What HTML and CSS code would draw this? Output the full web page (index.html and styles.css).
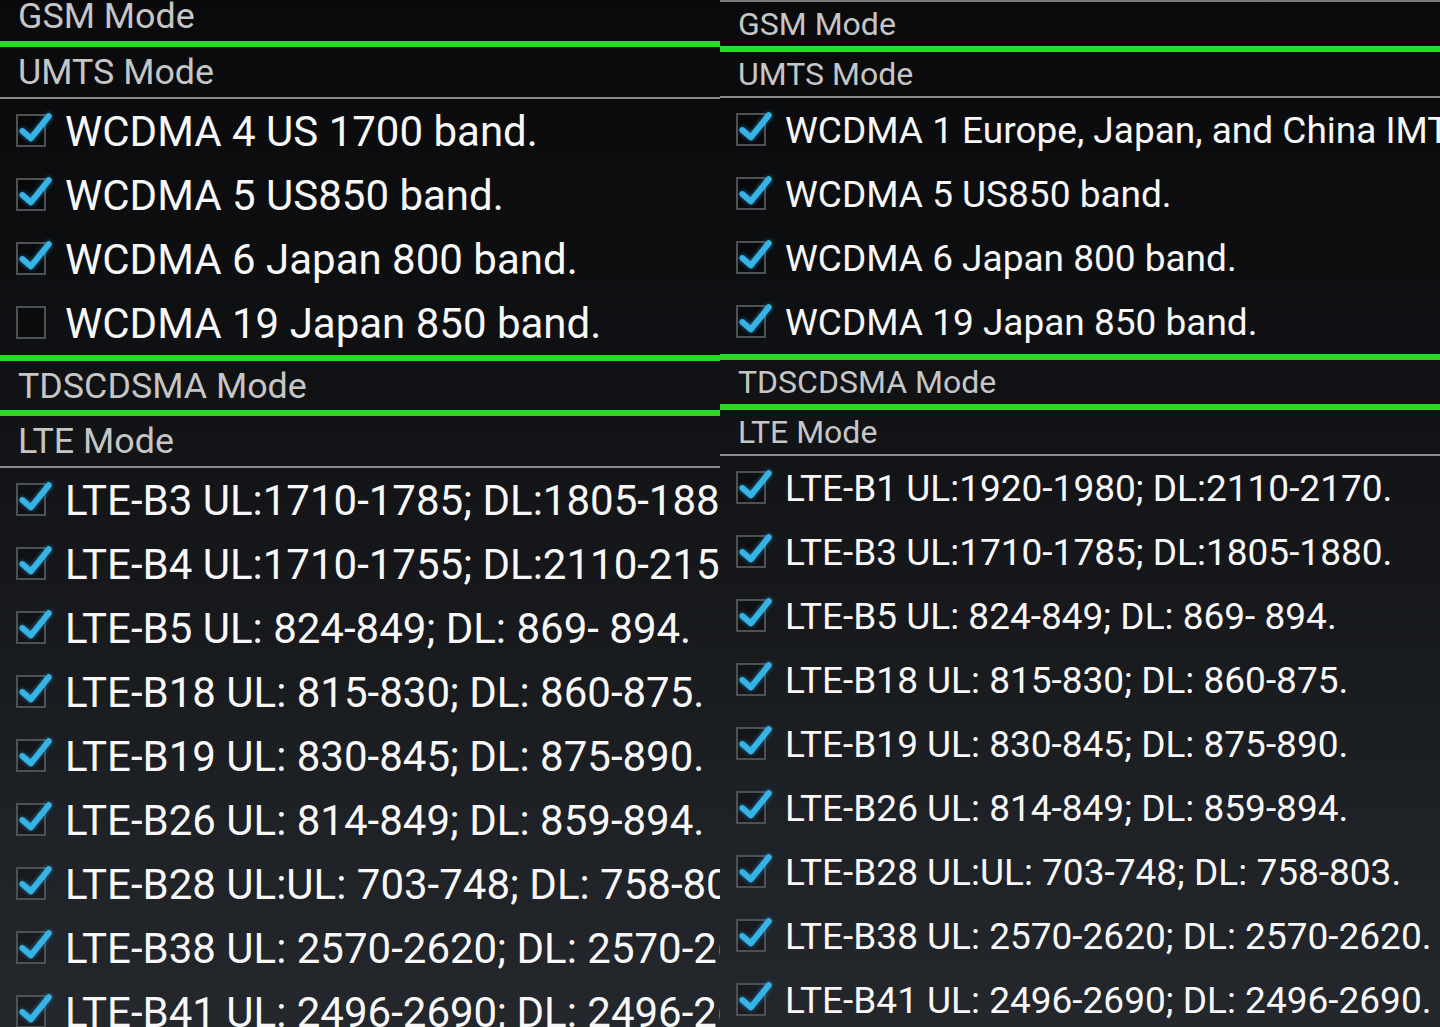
FILE: index.html
```html
<!DOCTYPE html>
<html>
<head>
<meta charset="utf-8">
<link rel="stylesheet" href="styles.css">
</head>
<body>
<div class="screen">
  <section class="panel panel-left">
    <div class="head head-first">GSM Mode</div>
    <div class="rule-green"></div>
    <div class="head">UMTS Mode</div>
    <div class="rule-gray"></div>
    <div class="row"><span class="box on"><svg viewBox="0 0 34 34"><path d="M6 17 L14 24 L31 3"/></svg></span><span class="label">WCDMA 4 US 1700 band.</span></div>
    <div class="row"><span class="box on"><svg viewBox="0 0 34 34"><path d="M6 17 L14 24 L31 3"/></svg></span><span class="label">WCDMA 5 US850 band.</span></div>
    <div class="row"><span class="box on"><svg viewBox="0 0 34 34"><path d="M6 17 L14 24 L31 3"/></svg></span><span class="label">WCDMA 6 Japan 800 band.</span></div>
    <div class="row"><span class="box"></span><span class="label">WCDMA 19 Japan 850 band.</span></div>
    <div class="rule-green"></div>
    <div class="head head-mid">TDSCDSMA Mode</div>
    <div class="rule-green"></div>
    <div class="head">LTE Mode</div>
    <div class="rule-gray"></div>
    <div class="row"><span class="box on"><svg viewBox="0 0 34 34"><path d="M6 17 L14 24 L31 3"/></svg></span><span class="label">LTE-B3 UL:1710-1785; DL:1805-1880.</span></div>
    <div class="row"><span class="box on"><svg viewBox="0 0 34 34"><path d="M6 17 L14 24 L31 3"/></svg></span><span class="label">LTE-B4 UL:1710-1755; DL:2110-2155.</span></div>
    <div class="row"><span class="box on"><svg viewBox="0 0 34 34"><path d="M6 17 L14 24 L31 3"/></svg></span><span class="label">LTE-B5 UL: 824-849; DL: 869- 894.</span></div>
    <div class="row"><span class="box on"><svg viewBox="0 0 34 34"><path d="M6 17 L14 24 L31 3"/></svg></span><span class="label">LTE-B18 UL: 815-830; DL: 860-875.</span></div>
    <div class="row"><span class="box on"><svg viewBox="0 0 34 34"><path d="M6 17 L14 24 L31 3"/></svg></span><span class="label">LTE-B19 UL: 830-845; DL: 875-890.</span></div>
    <div class="row"><span class="box on"><svg viewBox="0 0 34 34"><path d="M6 17 L14 24 L31 3"/></svg></span><span class="label">LTE-B26 UL: 814-849; DL: 859-894.</span></div>
    <div class="row"><span class="box on"><svg viewBox="0 0 34 34"><path d="M6 17 L14 24 L31 3"/></svg></span><span class="label">LTE-B28 UL:UL: 703-748; DL: 758-803.</span></div>
    <div class="row"><span class="box on"><svg viewBox="0 0 34 34"><path d="M6 17 L14 24 L31 3"/></svg></span><span class="label">LTE-B38 UL: 2570-2620; DL: 2570-2620.</span></div>
    <div class="row"><span class="box on"><svg viewBox="0 0 34 34"><path d="M6 17 L14 24 L31 3"/></svg></span><span class="label">LTE-B41 UL: 2496-2690; DL: 2496-2690.</span></div>
  </section>
  <section class="panel panel-right">
    <div class="rule-top"></div>
    <div class="head">GSM Mode</div>
    <div class="rule-green"></div>
    <div class="head">UMTS Mode</div>
    <div class="rule-gray"></div>
    <div class="row"><span class="box on"><svg viewBox="0 0 34 34"><path d="M6 17 L14 24 L31 3"/></svg></span><span class="label">WCDMA 1 Europe, Japan, and China IMT 2100 band.</span></div>
    <div class="row"><span class="box on"><svg viewBox="0 0 34 34"><path d="M6 17 L14 24 L31 3"/></svg></span><span class="label">WCDMA 5 US850 band.</span></div>
    <div class="row"><span class="box on"><svg viewBox="0 0 34 34"><path d="M6 17 L14 24 L31 3"/></svg></span><span class="label">WCDMA 6 Japan 800 band.</span></div>
    <div class="row"><span class="box on"><svg viewBox="0 0 34 34"><path d="M6 17 L14 24 L31 3"/></svg></span><span class="label">WCDMA 19 Japan 850 band.</span></div>
    <div class="rule-green"></div>
    <div class="head">TDSCDSMA Mode</div>
    <div class="rule-green"></div>
    <div class="head">LTE Mode</div>
    <div class="rule-gray"></div>
    <div class="row"><span class="box on"><svg viewBox="0 0 34 34"><path d="M6 17 L14 24 L31 3"/></svg></span><span class="label">LTE-B1 UL:1920-1980; DL:2110-2170.</span></div>
    <div class="row"><span class="box on"><svg viewBox="0 0 34 34"><path d="M6 17 L14 24 L31 3"/></svg></span><span class="label">LTE-B3 UL:1710-1785; DL:1805-1880.</span></div>
    <div class="row"><span class="box on"><svg viewBox="0 0 34 34"><path d="M6 17 L14 24 L31 3"/></svg></span><span class="label">LTE-B5 UL: 824-849; DL: 869- 894.</span></div>
    <div class="row"><span class="box on"><svg viewBox="0 0 34 34"><path d="M6 17 L14 24 L31 3"/></svg></span><span class="label">LTE-B18 UL: 815-830; DL: 860-875.</span></div>
    <div class="row"><span class="box on"><svg viewBox="0 0 34 34"><path d="M6 17 L14 24 L31 3"/></svg></span><span class="label">LTE-B19 UL: 830-845; DL: 875-890.</span></div>
    <div class="row"><span class="box on"><svg viewBox="0 0 34 34"><path d="M6 17 L14 24 L31 3"/></svg></span><span class="label">LTE-B26 UL: 814-849; DL: 859-894.</span></div>
    <div class="row"><span class="box on"><svg viewBox="0 0 34 34"><path d="M6 17 L14 24 L31 3"/></svg></span><span class="label">LTE-B28 UL:UL: 703-748; DL: 758-803.</span></div>
    <div class="row"><span class="box on"><svg viewBox="0 0 34 34"><path d="M6 17 L14 24 L31 3"/></svg></span><span class="label">LTE-B38 UL: 2570-2620; DL: 2570-2620.</span></div>
    <div class="row"><span class="box on"><svg viewBox="0 0 34 34"><path d="M6 17 L14 24 L31 3"/></svg></span><span class="label">LTE-B41 UL: 2496-2690; DL: 2496-2690.</span></div>
  </section>
</div>
</body>
</html>
```

FILE: styles.css
```css
html, body {
  margin: 0;
  padding: 0;
  background: #0b0b0d;
}

.screen {
  display: flex;
  width: 1440px;
  height: 1027px;
  overflow: hidden;
}

.panel {
  width: 720px;
  height: 1027px;
  overflow: hidden;
  display: flex;
  flex-direction: column;
  flex: none;
  background: linear-gradient(to bottom, #0a0a0c 0%, #0d0e10 25%, #15171a 55%, #1e2125 80%, #24272c 100%);
  font-family: Roboto, "Noto Sans", "Liberation Sans", sans-serif;
}

.head {
  flex: none;
  display: flex;
  align-items: center;
  padding-left: 18px;
  color: #c6c6c6;
  white-space: nowrap;
}

.panel-left .head {
  height: 50px;
  font-size: 35.8px;
}

.panel-left .head-first {
  margin-top: -9px;
}

.panel-left .head-mid {
  height: 49px;
}

.panel-right .head {
  height: 44px;
  padding-left: 18px;
  font-size: 32px;
}

.rule-green {
  flex: none;
  height: 6px;
  background: #25dd25;
}

.rule-gray {
  flex: none;
  height: 2px;
  background: #8c8c8c;
}

.rule-top {
  flex: none;
  height: 2px;
  background: #7a7a7a;
}

.row {
  flex: none;
  height: 64px;
  display: flex;
  align-items: center;
  padding-left: 16px;
  white-space: nowrap;
  color: #f7f7f7;
}

.panel-left .row .label {
  font-size: 42px;
}

.panel-right .row .label {
  font-size: 37px;
}

.box {
  flex: none;
  position: relative;
  width: 30px;
  height: 33px;
  border: 2px solid #4e5154;
  background: rgba(0, 0, 0, 0.25);
  margin-right: 19px;
  box-sizing: border-box;
  margin-top: -2px;
}

.box svg {
  position: absolute;
  left: -2px;
  top: -3px;
  width: 36px;
  height: 36px;
  overflow: visible;
}

.box svg path {
  fill: none;
  stroke: #36b4e6;
  stroke-width: 5.5;
  stroke-linecap: round;
  stroke-linejoin: round;
  filter: drop-shadow(0 0 2px rgba(40, 160, 230, 0.7));
}
```
